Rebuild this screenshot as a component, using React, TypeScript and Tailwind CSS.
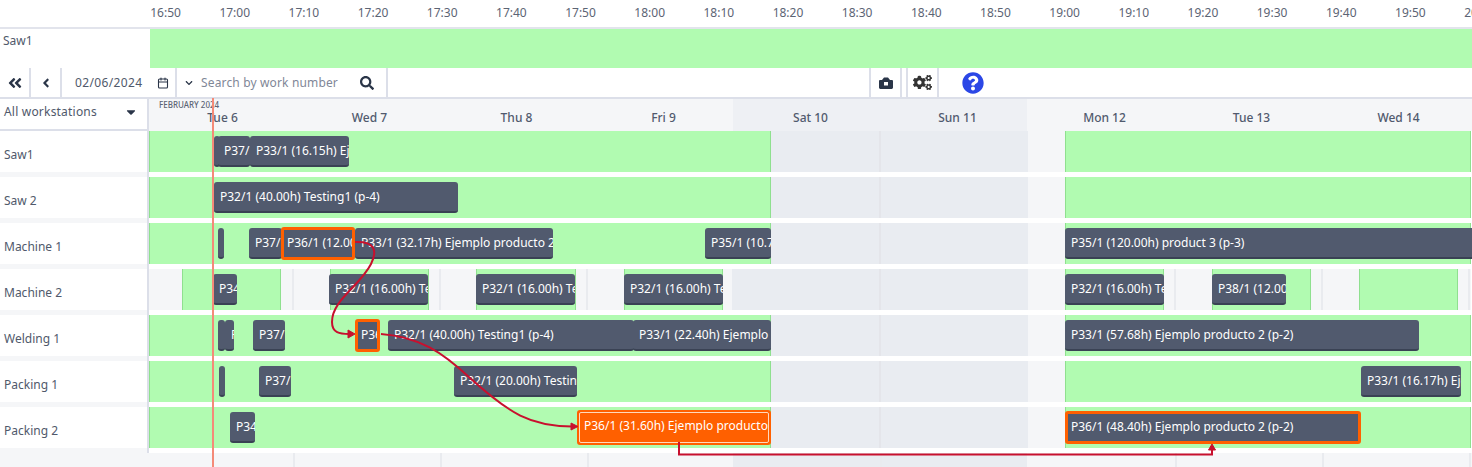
import { FaAngleDoubleLeft, FaAngleLeft, FaChevronDown, FaCogs, FaQuestionCircle, FaSearch, FaCaretDown } from "react-icons/fa";
import { Calendar } from "lucide-react";

type Seg = { w: number; kind: "green" | "off" | "light" };
type Bar = { x: number; w: number; text?: string; style?: "outline" | "solid" };
type Row = { name: string; segs: Seg[]; lines?: number[]; bars: Bar[] };

const times = ["16:50","17:00","17:10","17:20","17:30","17:40","17:50","18:00","18:10","18:20","18:30","18:40","18:50","19:00","19:10","19:20","19:30","19:40","19:50","20:00"];
const days = ["Tue 6","Wed 7","Thu 8","Fri 9","Sat 10","Sun 11","Mon 12","Tue 13","Wed 14"];

const fullWeek: Seg[] = [
  { w: 622, kind: "green" },
  { w: 257, kind: "off" },
  { w: 37, kind: "light" },
  { w: 406, kind: "green" },
];

const rows: Row[] = [
  {
    name: "Saw1",
    segs: fullWeek,
    bars: [
      { x: 215, w: 5 },
      { x: 219, w: 32, text: "P37/1 (8.00h)" },
      { x: 251, w: 99, text: "P33/1 (16.15h) Ejemplo producto 2" },
    ],
  },
  {
    name: "Saw 2",
    segs: fullWeek,
    bars: [{ x: 215, w: 244, text: "P32/1 (40.00h) Testing1 (p-4)" }],
  },
  {
    name: "Machine 1",
    segs: fullWeek,
    bars: [
      { x: 219, w: 6 },
      { x: 250, w: 33, text: "P37/1 (8.00h)" },
      { x: 282, w: 74, text: "P36/1 (12.00h) Ejemplo", style: "outline" },
      { x: 356, w: 198, text: "P33/1 (32.17h) Ejemplo producto 2 (p-2)" },
      { x: 706, w: 66, text: "P35/1 (10.70h) product 3" },
      { x: 1066, w: 420, text: "P35/1 (120.00h) product 3 (p-3)" },
    ],
  },
  {
    name: "Machine 2",
    segs: [
      { w: 33, kind: "light" },
      { w: 99, kind: "green" },
      { w: 49, kind: "light" },
      { w: 99, kind: "green" },
      { w: 47, kind: "light" },
      { w: 100, kind: "green" },
      { w: 48, kind: "light" },
      { w: 99, kind: "green" },
      { w: 9, kind: "light" },
      { w: 296, kind: "off" },
      { w: 37, kind: "light" },
      { w: 99, kind: "green" },
      { w: 48, kind: "light" },
      { w: 99, kind: "green" },
      { w: 48, kind: "light" },
      { w: 99, kind: "green" },
      { w: 13, kind: "light" },
    ],
    lines: [293, 440, 587, 1175, 1322, 1469],
    bars: [
      { x: 214, w: 24, text: "P34/1 (4.00h)" },
      { x: 330, w: 99, text: "P32/1 (16.00h) Testing1" },
      { x: 477, w: 99, text: "P32/1 (16.00h) Testing1" },
      { x: 625, w: 99, text: "P32/1 (16.00h) Testing1" },
      { x: 1066, w: 99, text: "P32/1 (16.00h) Testing1" },
      { x: 1213, w: 74, text: "P38/1 (12.00h) Test" },
    ],
  },
  {
    name: "Welding 1",
    segs: fullWeek,
    bars: [
      { x: 219, w: 7 },
      { x: 226, w: 9, text: "P" },
      { x: 254, w: 32, text: "P37/1 (8.00h)" },
      { x: 356, w: 25, text: "P36/1 (4.00h)", style: "outline" },
      { x: 389, w: 246, text: "P32/1 (40.00h) Testing1 (p-4)" },
      { x: 634, w: 138, text: "P33/1 (22.40h) Ejemplo producto" },
      { x: 1066, w: 354, text: "P33/1 (57.68h) Ejemplo producto 2 (p-2)" },
    ],
  },
  {
    name: "Packing 1",
    segs: fullWeek,
    bars: [
      { x: 220, w: 6 },
      { x: 260, w: 32, text: "P37/1 (8.00h)" },
      { x: 455, w: 123, text: "P32/1 (20.00h) Testing1" },
      { x: 1362, w: 100, text: "P33/1 (16.17h) Ejemplo" },
    ],
  },
  {
    name: "Packing 2",
    segs: fullWeek,
    bars: [
      { x: 231, w: 25, text: "P34/1 (4.00h)" },
      { x: 578, w: 194, text: "P36/1 (31.60h) Ejemplo producto 2 (p-2)", style: "solid" },
      { x: 1066, w: 296, text: "P36/1 (48.40h) Ejemplo producto 2 (p-2)", style: "outline" },
    ],
  },
];

function GanttBar({ bar }: { bar: Bar }) {
  const left = bar.x - 150;
  if (bar.style === "solid") {
    return (
      <div
        className="absolute top-[3px] h-[35px] rounded-[3px] bg-[#ff6000] p-[2px]"
        style={{ left, width: bar.w }}
      >
        <div className="h-full overflow-hidden whitespace-nowrap rounded-[2px] border border-[#ffd9bd] pl-[4px] text-[12px] leading-[26px] text-white">
          {bar.text}
        </div>
      </div>
    );
  }
  if (bar.style === "outline") {
    return (
      <div
        className="absolute top-[4px] h-[33px] overflow-hidden whitespace-nowrap rounded-[3px] border-[3px] border-[#ff6000] bg-[#515a6e] pl-[3px] text-[12px] leading-[26px] text-white"
        style={{ left, width: bar.w }}
      >
        {bar.text}
      </div>
    );
  }
  return (
    <div
      className="absolute top-[5px] h-[31px] overflow-hidden whitespace-nowrap rounded-[3px] border-b-2 border-[#3a4254] bg-[#515a6e] pl-[6px] text-[12px] leading-[29px] text-white"
      style={{ left, width: bar.w }}
    >
      {bar.text}
    </div>
  );
}

function ChartRow({ row }: { row: Row }) {
  return (
    <div className="flex h-[46px]">
      <div className="h-[46px] w-[149px] shrink-0 border-r-2 border-[#dcdfe9] bg-[#f5f6f8]">
        <div className="flex h-[41px] items-end bg-white pb-[7px] pl-[4px] text-[12px] leading-[20px] text-[#50596b]">
          {row.name}
        </div>
      </div>
      <div className="relative h-[41px] flex-1">
        <div className="absolute inset-0 flex">
          {row.segs.map((seg, i) => (
            <div
              key={i}
              className={
                seg.kind === "green"
                  ? "h-full shrink-0 border-x border-[#8fe08f] bg-[#b1fbb1]"
                  : seg.kind === "off"
                    ? "h-full shrink-0 bg-[#e9ecf1]"
                    : "h-full shrink-0 bg-[#f5f6f8]"
              }
              style={{ width: seg.w }}
            />
          ))}
        </div>
        {(row.lines ?? []).map((x) => (
          <div key={x} className="absolute inset-y-0 w-[2px] bg-[#e9ebef]" style={{ left: x - 150 }} />
        ))}
        {row.segs === fullWeek && (
          <div className="absolute inset-y-0 left-[730px] w-[2px] bg-[#e4e5ea]" />
        )}
        {row.segs !== fullWeek && (
          <div className="absolute inset-y-0 left-[730px] w-[2px] bg-[#e4e5ea]" />
        )}
        {row.bars.map((bar, i) => (
          <GanttBar key={i} bar={bar} />
        ))}
      </div>
    </div>
  );
}

function Divider() {
  return <div className="h-full w-[2px] shrink-0 bg-[#dcdfe9]" />;
}

export default function App() {
  return (
    <div
      className="relative h-[467px] w-[1472px] overflow-hidden bg-white"
      style={{ fontFamily: '"Noto Sans", "Open Sans", sans-serif' }}
    >
      {/* fixed timeline */}
      <div className="flex h-[29px] items-center border-b-2 border-[#e2e4ec] pl-[131px] pb-[2px] text-[12px] text-[#5c6474]">
        {times.map((t) => (
          <div key={t} className="w-[69.17px] shrink-0 text-center">
            {t}
          </div>
        ))}
      </div>
      <div className="flex h-[39px]">
        <div className="w-[150px] shrink-0 pl-[3px] pt-[3px] text-[12px] text-[#50596b]">Saw1</div>
        <div className="flex-1 bg-[#b1fbb1]" />
      </div>

      {/* toolbar */}
      <div className="flex h-[31px] items-center border-b-2 border-[#dcdfe9] bg-white text-[#2a3548]">
        <div className="flex h-full w-[29px] items-center justify-center">
          <FaAngleDoubleLeft size={16} />
        </div>
        <Divider />
        <div className="flex h-full w-[29px] items-center justify-center">
          <FaAngleLeft size={14} />
        </div>
        <Divider />
        <div className="flex h-full w-[113px] items-center justify-between pl-[13px] pr-[6px] text-[12px] tracking-[0.35px] text-[#50596b]">
          <span>02/06/2024</span>
          <Calendar size={12} strokeWidth={2.2} className="text-[#2a3548]" />
        </div>
        <Divider />
        <div className="flex h-full w-[209px] items-center pl-[8px] text-[12px] text-[#7f8797]">
          <FaChevronDown size={8} className="mr-[8px] text-[#2a3548]" />
          <span className="tracking-[0.15px]">Search by work number</span>
          <FaSearch size={14} className="ml-auto mr-[12px] text-[#2a3548]" />
        </div>
        <Divider />
        <div className="w-[481px]" />
        <Divider />
        <div className="flex h-full w-[29px] items-center justify-center">
          <svg width="14" height="12" viewBox="0 0 14 12" fill="#2a3548">
            <path d="M0 10.5V4.2C0 3.6.5 3 1.2 3H3L5 .6h4L11 3h1.8c.7 0 1.2.6 1.2 1.2v6.3c0 .8-.6 1.4-1.3 1.4H1.3C.6 11.900 0 11.300 0 10.500zM5 5v3.600h4V5z" fillRule="evenodd" />
          </svg>
        </div>
        <Divider />
        <div className="w-[4px]" />
        <Divider />
        <div className="flex h-full w-[29px] items-center justify-center">
          <FaCogs size={19} className="text-[#333]" />
        </div>
        <Divider />
        <div className="flex h-full w-[68px] items-center justify-center">
          <FaQuestionCircle size={22} className="text-[#2b47e6]" />
        </div>
      </div>

      {/* day header */}
      <div className="flex h-[32px]">
        <div className="flex w-[149px] shrink-0 items-center justify-between border-r-2 border-b-2 border-[#dcdfe9] pl-[4px] pr-[9px] pb-[4px] text-[12px] tracking-[0.2px] text-[#50596b]">
          <span>All workstations</span>
          <FaCaretDown size={14} className="text-[#2a3548]" />
        </div>
        <div className="relative flex flex-1 bg-[#f5f6f8]">
          <div className="absolute left-[10px] top-[1px] text-[8px] font-medium leading-[10px] text-[#5c6474]">
            FEBRUARY 2024
          </div>
          <div className="absolute inset-y-0 left-[584px] w-[294px] bg-[#eef0f4]" />
          {days.map((d) => (
            <div
              key={d}
              className="relative w-[147px] shrink-0 pt-[10px] text-center text-[12px] font-medium leading-[17px] text-[#515a6e]"
            >
              {d}
            </div>
          ))}
        </div>
      </div>

      {/* chart */}
      {rows.map((row) => (
        <ChartRow key={row.name} row={row} />
      ))}

      {/* footer strip */}
      <div className="relative h-[20px] bg-[#f5f6f8]">
        <div className="absolute left-[733px] top-0 h-full w-[294px] bg-[#e9ecf1]" />
        {[293, 440, 587, 880, 1175, 1322, 1469].map((x) => (
          <div key={x} className="absolute inset-y-0 w-[2px] bg-[#e9ebef]" style={{ left: x }} />
        ))}
      </div>

      {/* now line */}
      <div className="absolute bottom-0 left-[212px] top-[98px] w-[2px] bg-[#f48a78]" />

      {/* dependency arrows */}
      <svg className="pointer-events-none absolute inset-0" width="1472" height="467" fill="none" stroke="#c8102e" strokeWidth="2">
        <path d="M355 242 C374 241 378 250 371 264 C360 286 332 300 332 322 C332 333 340 334 349 334" />
        <path d="M348 330 L355 334 L348 338 Z" fill="#c8102e" strokeWidth="1" />
        <path d="M381 334 C420 337 442 352 470 378 C510 414 530 426 572 426.500" />
        <path d="M571 423 L578 426.500 L571 430 Z" fill="#c8102e" strokeWidth="1" />
        <path d="M679 442 V454.500 H1212 V449" />
        <path d="M1208.500 450 L1212 444 L1215.500 450 Z" fill="#c8102e" strokeWidth="1" />
      </svg>
    </div>
  );
}
